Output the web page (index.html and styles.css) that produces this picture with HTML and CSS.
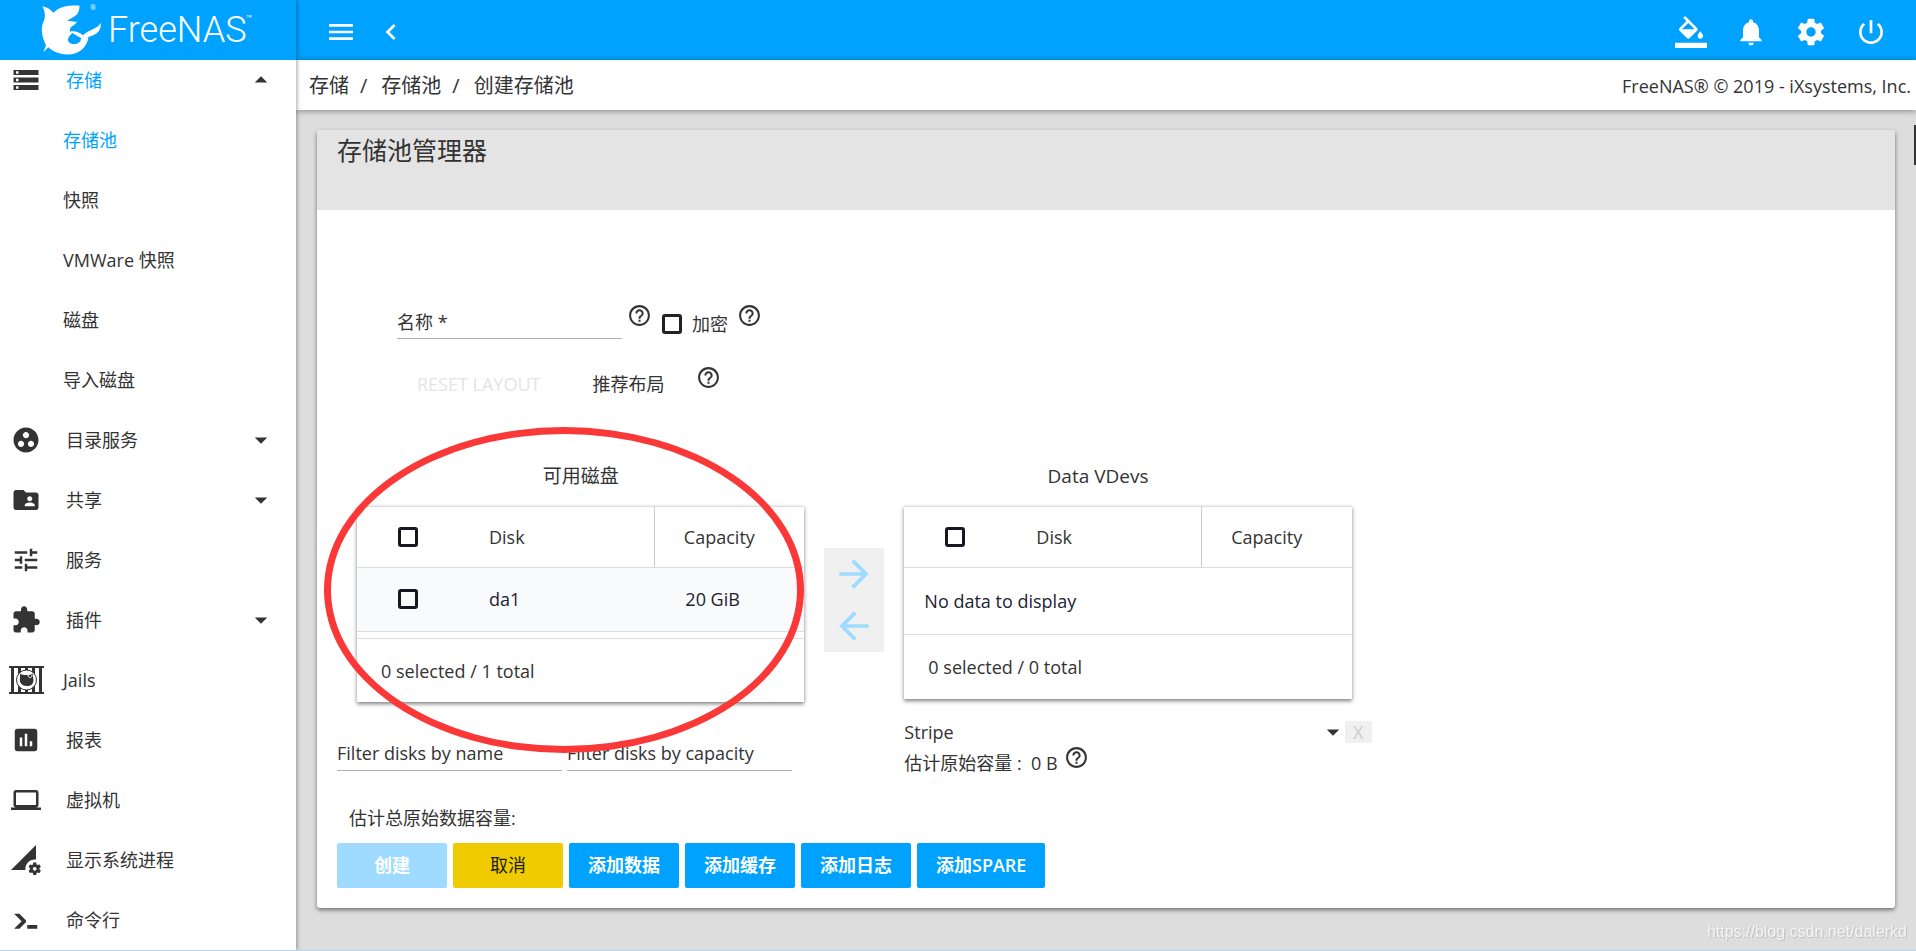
FILE: index.html
```html
<!DOCTYPE html>
<html lang="zh-CN">
<head>
    <meta charset="UTF-8">
    <meta name="viewport" content="width=device-width, initial-scale=1.0">
    <title>FreeNAS - 创建存储池</title>
    <link rel="stylesheet" href="styles.css">
</head>
<body>

    <svg class="symbols" aria-hidden="true">
        <symbol id="help" viewBox="0 0 24 24"><path d="M11 18h2v-2h-2v2zm1-16C6.48 2 2 6.48 2 12s4.48 10 10 10 10-4.48 10-10S17.52 2 12 2zm0 18c-4.41 0-8-3.59-8-8s3.59-8 8-8 8 3.59 8 8-3.59 8-8 8zm0-14c-2.21 0-4 1.79-4 4h2c0-1.1.9-2 2-2s2 .9 2 2c0 2-3 1.75-3 5h2c0-2.25 3-2.5 3-5 0-2.21-1.79-4-4-4z"/></symbol>
        <symbol id="caret-down" viewBox="0 0 24 24"><path d="M7 10l5 5 5-5z"/></symbol>
        <symbol id="caret-up" viewBox="0 0 24 24"><path d="M7 14l5-5 5 5z"/></symbol>
    </svg>

    <aside class="sidebar">
        <a class="brand" href="#">
            <svg class="brand-logo" viewBox="33 12 184 156">
                <path d="M37 18C52 21 62 27 70 38C88 20 112 15 149 16C150 32 143 45 131 51L112 62L142 66L134 74C122 80 118 88 121 95C135 91 150 98 160 106C168 96 180 92 192 86C202 82 210 76 213 68C215 85 208 97 196 103C191 107 184 108 176 111C173 140 150 164 112 164C85 163 66 152 55 142L40 157L48 136C30 100 34 75 43 60C46 45 45 32 37 18Z"/>
                <path class="brand-hole" d="M128 99C116 108 110 120 118 128C128 136 142 134 152 124L154 114L142 108Z"/>
            </svg>
            <sup class="brand-mark">®</sup>
            <span class="brand-name">FreeNAS</span>
            <sup class="brand-mark">™</sup>
        </a>
        <nav class="nav">
            <a class="nav-item active" href="#">
                <svg class="nav-icon" viewBox="0 0 24 24"><path d="M2 20h20v-4H2v4zm2-3h2v2H4v-2zM2 4v4h20V4H2zm4 3H4V5h2v2zm-4 7h20v-4H2v4zm2-3h2v2H4v-2z"/></svg>
                <span>存储</span>
                <svg class="caret"><use href="#caret-up"/></svg>
            </a>
            <a class="nav-item nav-sub active" href="#">存储池</a>
            <a class="nav-item nav-sub" href="#">快照</a>
            <a class="nav-item nav-sub" href="#">VMWare 快照</a>
            <a class="nav-item nav-sub" href="#">磁盘</a>
            <a class="nav-item nav-sub" href="#">导入磁盘</a>
            <a class="nav-item" href="#">
                <svg class="nav-icon" viewBox="0 0 24 24"><path d="M12 2C6.48 2 2 6.48 2 12s4.48 10 10 10 10-4.48 10-10S17.52 2 12 2zM8 17.5c-1.38 0-2.5-1.12-2.5-2.5s1.12-2.5 2.5-2.5 2.5 1.12 2.5 2.5-1.12 2.5-2.5 2.5zM9.5 8c0-1.38 1.12-2.5 2.5-2.5s2.5 1.12 2.5 2.5-1.12 2.5-2.5 2.5S9.5 9.38 9.5 8zm6.5 9.5c-1.38 0-2.5-1.12-2.5-2.5s1.12-2.5 2.5-2.5 2.5 1.12 2.5 2.5-1.12 2.5-2.5 2.5z"/></svg>
                <span>目录服务</span>
                <svg class="caret"><use href="#caret-down"/></svg>
            </a>
            <a class="nav-item" href="#">
                <svg class="nav-icon" viewBox="0 0 24 24"><path d="M20 6h-8l-2-2H4c-1.1 0-1.99.9-1.99 2L2 18c0 1.1.9 2 2 2h16c1.1 0 2-.9 2-2V8c0-1.1-.9-2-2-2zm-5 3c1.1 0 2 .9 2 2s-.9 2-2 2-2-.9-2-2 .9-2 2-2zm4 8h-8v-1c0-1.33 2.67-2 4-2s4 .67 4 2v1z"/></svg>
                <span>共享</span>
                <svg class="caret"><use href="#caret-down"/></svg>
            </a>
            <a class="nav-item" href="#">
                <svg class="nav-icon" viewBox="0 0 24 24"><path d="M3 17v2h6v-2H3zM3 5v2h10V5H3zm10 16v-2h8v-2h-8v-2h-2v6h2zM7 9v2H3v2h4v2h2V9H7zm14 4v-2H11v2h10zm-6-4h2V7h4V5h-4V3h-2v6z"/></svg>
                <span>服务</span>
            </a>
            <a class="nav-item" href="#">
                <svg class="nav-icon" viewBox="0 0 24 24"><path d="M20.5 11H19V7c0-1.1-.9-2-2-2h-4V3.5C13 2.12 11.88 1 10.5 1S8 2.12 8 3.5V5H4c-1.1 0-1.99.9-1.99 2v3.8H3.5c1.49 0 2.7 1.21 2.7 2.7s-1.21 2.7-2.7 2.7H2V20c0 1.1.9 2 2 2h3.8v-1.5c0-1.49 1.21-2.7 2.7-2.7 1.49 0 2.7 1.21 2.7 2.7V22H17c1.1 0 2-.9 2-2v-4h1.5c1.38 0 2.5-1.12 2.5-2.5S21.88 11 20.5 11z"/></svg>
                <span>插件</span>
                <svg class="caret"><use href="#caret-down"/></svg>
            </a>
            <a class="nav-item nav-jails" href="#">
                <svg class="jail-icon" viewBox="0 0 35 30">
                    <path d="M0 1h35v2H0zM0 27h35v2H0zM2 3h3v24H2zM9 3h3v24H9zM16 3h3v24h-3zM23 3h3v24h-3zM30 3h3v24h-3z"/>
                    <circle cx="17.500" cy="15" r="10" class="jail-disc"/>
                    <path d="M11 9l4 1h5l4-1v3c2 8-3 9-6 9-5 0-8-3-7-9z"/>
                    <path d="M19 10c0 3 4 4 4 0" class="jail-line"/>
                </svg>
                <span>Jails</span>
            </a>
            <a class="nav-item" href="#">
                <svg class="nav-icon" viewBox="0 0 24 24"><path d="M19 3H5c-1.1 0-2 .9-2 2v14c0 1.1.9 2 2 2h14c1.1 0 2-.9 2-2V5c0-1.1-.9-2-2-2zM9 17H7v-7h2v7zm4 0h-2V7h2v10zm4 0h-2v-4h2v4z"/></svg>
                <span>报表</span>
            </a>
            <a class="nav-item" href="#">
                <svg class="nav-icon" viewBox="0 0 24 24"><path d="M20 18c1.1 0 1.99-.9 1.99-2L22 6c0-1.1-.9-2-2-2H4c-1.1 0-2 .9-2 2v10c0 1.1.9 2 2 2H0v2h24v-2h-4zM4 6h16v10H4V6z"/></svg>
                <span>虚拟机</span>
            </a>
            <a class="nav-item" href="#">
                <svg class="nav-icon" viewBox="0 0 24 24"><path d="M18.99 11.5c.34 0 .67.03 1 .07L20 0 0 20h11.56c-.04-.33-.07-.66-.07-1 0-4.14 3.36-7.5 7.5-7.5zm3.71 7.99c.02-.16.04-.32.04-.49 0-.17-.01-.33-.04-.49l1.06-.83c.09-.08.12-.21.06-.32l-1-1.73c-.06-.11-.19-.15-.31-.11l-1.24.5c-.26-.2-.54-.37-.85-.49l-.19-1.32c-.01-.12-.12-.21-.24-.21h-2c-.12 0-.23.09-.25.21l-.19 1.32c-.3.13-.59.29-.85.49l-1.24-.5c-.11-.04-.24 0-.31.11l-1 1.73c-.06.11-.04.24.06.32l1.06.83c-.02.16-.03.32-.03.49 0 .17.01.33.03.49l-1.06.83c-.09.08-.12.21-.06.32l1 1.73c.06.11.19.15.31.11l1.24-.5c.26.2.54.37.85.49l.19 1.32c.02.12.12.21.25.21h2c.12 0 .23-.09.25-.21l.19-1.32c.3-.13.59-.29.84-.49l1.25.5c.11.04.24 0 .31-.11l1-1.73c.06-.11.03-.24-.06-.32l-1.07-.83zm-3.71 1.01c-.83 0-1.5-.67-1.5-1.5s.67-1.5 1.5-1.5 1.5.67 1.5 1.5-.67 1.5-1.5 1.5z"/></svg>
                <span>显示系统进程</span>
            </a>
            <a class="nav-item" href="#">
                <svg class="nav-icon" viewBox="0 0 24 24"><path d="M13 19v-3h8v3h-8zM8.500 13L2.470 7h4.240l4.960 4.950c.58.59.58 1.550 0 2.120L6.740 19H2.500l6-6z"/></svg>
                <span>命令行</span>
            </a>
        </nav>
    </aside>

    <div class="page">
        <header class="topbar">
            <button type="button" class="icon-button" aria-label="菜单"><svg class="top-icon" viewBox="0 0 24 24"><path d="M3 18h18v-2H3v2zm0-5h18v-2H3v2zm0-7v2h18V6H3z"/></svg></button>
            <button type="button" class="icon-button" aria-label="返回"><svg class="top-icon" viewBox="0 0 24 24"><path d="M15.410 7.410L14 6l-6 6 6 6 1.410-1.410L10.830 12z"/></svg></button>
            <div class="topbar-actions">
                <button type="button" class="icon-button" aria-label="主题"><svg class="top-icon" viewBox="0 0 24 24"><path d="M16.56 8.94L7.62 0 6.21 1.41l2.38 2.38-5.15 5.15c-.59.59-.59 1.54 0 2.12l5.5 5.5c.29.29.68.44 1.06.44s.77-.15 1.06-.44l5.5-5.5c.59-.58.59-1.53 0-2.12zM5.21 10L10 5.21 14.79 10H5.21zM19 11.5s-2 2.17-2 3.5c0 1.1.9 2 2 2s2-.9 2-2c0-1.33-2-3.5-2-3.5zM0 20h24v4H0z"/></svg></button>
                <button type="button" class="icon-button" aria-label="通知"><svg class="top-icon" viewBox="0 0 24 24"><path d="M12 22c1.1 0 2-.9 2-2h-4c0 1.1.89 2 2 2zm6-6v-5c0-3.07-1.64-5.64-4.5-6.32V4c0-.83-.67-1.5-1.5-1.5s-1.5.67-1.5 1.5v.68C7.63 5.36 6 7.92 6 11v5l-2 2v1h16v-1l-2-2z"/></svg></button>
                <button type="button" class="icon-button" aria-label="设置"><svg class="top-icon" viewBox="0 0 24 24"><path d="M19.43 12.98c.04-.32.07-.64.07-.98s-.03-.66-.07-.98l2.11-1.65c.19-.15.24-.42.12-.64l-2-3.46c-.12-.22-.39-.3-.61-.22l-2.49 1c-.52-.4-1.08-.73-1.69-.98l-.38-2.65C14.46 2.18 14.25 2 14 2h-4c-.25 0-.46.18-.49.42l-.38 2.65c-.61.25-1.17.59-1.69.98l-2.49-1c-.23-.09-.49 0-.61.22l-2 3.46c-.13.22-.07.49.12.64l2.11 1.65c-.04.32-.07.65-.07.98s.03.66.07.98l-2.11 1.65c-.19.15-.24.42-.12.64l2 3.46c.12.22.39.3.61.22l2.49-1c.52.4 1.08.73 1.69.98l.38 2.65c.03.24.24.42.49.42h4c.25 0 .46-.18.49-.42l.38-2.65c.61-.25 1.17-.59 1.69-.98l2.49 1c.23.09.49 0 .61-.22l2-3.46c.12-.22.07-.49-.12-.64l-2.11-1.65zM12 15.5c-1.93 0-3.5-1.57-3.5-3.5s1.57-3.5 3.5-3.5 3.5 1.57 3.5 3.5-1.57 3.5-3.5 3.5z"/></svg></button>
                <button type="button" class="icon-button" aria-label="电源"><svg class="top-icon" viewBox="0 0 24 24"><path d="M13 3h-2v10h2V3zm4.83 2.17l-1.42 1.42C17.99 7.86 19 9.81 19 12c0 3.87-3.13 7-7 7s-7-3.13-7-7c0-2.19 1.01-4.14 2.58-5.42L6.17 5.17C4.23 6.82 3 9.26 3 12c0 4.97 4.03 9 9 9s9-4.03 9-9c0-2.74-1.23-5.18-3.17-6.83z"/></svg></button>
            </div>
        </header>

        <div class="breadcrumb-bar">
            <nav class="breadcrumb">
                <a href="#">存储</a><span>/</span><a href="#">存储池</a><span>/</span><a href="#">创建存储池</a>
            </nav>
            <span class="copyright">FreeNAS® © 2019 - iXsystems, Inc.</span>
        </div>

        <main class="content">
            <form class="card">
                <h1 class="card-title">存储池管理器</h1>

                <div class="card-body">
                    <div class="name-row">
                        <input type="text" class="text-field" aria-label="名称" placeholder="名称 *" required>
                        <svg class="help"><use href="#help"/></svg>
                        <label class="encrypt"><input type="checkbox" class="checkbox">加密</label>
                        <svg class="help"><use href="#help"/></svg>
                    </div>
                    <div class="layout-row">
                        <button type="button" class="flat-button" disabled>RESET LAYOUT</button>
                        <button type="button" class="flat-button">推荐布局</button>
                        <svg class="help"><use href="#help"/></svg>
                    </div>

                    <div class="panels">
                        <section class="panel">
                            <h2 class="panel-title">可用磁盘</h2>
                            <div class="disk-box">
                                <table class="disk-table">
                                    <thead>
                                        <tr>
                                            <th class="col-check"><input type="checkbox" class="checkbox dark" aria-label="选择全部磁盘"></th>
                                            <th class="col-disk">Disk</th>
                                            <th class="col-capacity">Capacity</th>
                                        </tr>
                                    </thead>
                                    <tbody>
                                        <tr class="disk-row">
                                            <td class="col-check"><input type="checkbox" class="checkbox dark" aria-label="选择 da1"></td>
                                            <td>da1</td>
                                            <td class="col-size">20 GiB</td>
                                        </tr>
                                    </tbody>
                                </table>
                                <div class="disk-footer spaced">0 selected / 1 total</div>
                            </div>
                            <div class="filters">
                                <input type="text" class="text-field" aria-label="Filter disks by name" placeholder="Filter disks by name">
                                <input type="text" class="text-field" aria-label="Filter disks by capacity" placeholder="Filter disks by capacity">
                            </div>
                            <div class="highlight"></div>
                        </section>

                        <div class="transfer">
                            <button type="button" class="arrow-button" aria-label="添加" disabled><svg class="arrow" viewBox="0 0 24 24"><path d="M12 4l-1.410 1.410L16.170 11H4v2h12.170l-5.580 5.590L12 20l8-8z"/></svg></button>
                            <button type="button" class="arrow-button" aria-label="移除" disabled><svg class="arrow" viewBox="0 0 24 24"><path d="M20 11H7.830l5.590-5.590L12 4l-8 8 8 8 1.410-1.410L7.830 13H20v-2z"/></svg></button>
                        </div>

                        <section class="panel">
                            <h2 class="panel-title">Data VDevs</h2>
                            <div class="disk-box">
                                <table class="disk-table">
                                    <thead>
                                        <tr>
                                            <th class="col-check"><input type="checkbox" class="checkbox dark" aria-label="选择全部"></th>
                                            <th class="col-disk">Disk</th>
                                            <th class="col-capacity">Capacity</th>
                                        </tr>
                                    </thead>
                                    <tbody>
                                        <tr>
                                            <td class="empty" colspan="3">No data to display</td>
                                        </tr>
                                    </tbody>
                                </table>
                                <div class="disk-footer">0 selected / 0 total</div>
                            </div>
                            <div class="vdev-type">
                                <span class="select-box">
                                    <select class="select" aria-label="VDev 类型">
                                        <option>Stripe</option>
                                    </select>
                                    <svg class="caret"><use href="#caret-down"/></svg>
                                </span>
                                <button type="button" class="remove-button" disabled>X</button>
                            </div>
                            <div class="estimate">估计原始容量 : &nbsp;0 B <svg class="help"><use href="#help"/></svg></div>
                        </section>
                    </div>

                    <p class="total">估计总原始数据容量:</p>
                    <div class="actions">
                        <button type="submit" class="button" disabled>创建</button>
                        <button type="button" class="button accent">取消</button>
                        <button type="button" class="button">添加数据</button>
                        <button type="button" class="button">添加缓存</button>
                        <button type="button" class="button">添加日志</button>
                        <button type="button" class="button">添加SPARE</button>
                    </div>
                </div>
            </form>
        </main>
    </div>

    <div class="scroll-handle"></div>
    <div class="watermark">https://blog.csdn.net/dalerkd</div>

</body>
</html>
```
FILE: styles.css
```css
* {
    box-sizing: border-box;
}

body {
    margin: 0;
    display: flex;
    height: 100vh;
    overflow: hidden;
    font-family: "Open Sans", "Noto Sans CJK SC", sans-serif;
    font-size: 18px;
    line-height: 24px;
    color: #333;
    background-color: #ddd;
    border-bottom: 1px solid #b4d3ea;
}

a {
    color: inherit;
    text-decoration: none;
}

button, input, select {
    font: inherit;
    color: inherit;
    margin: 0;
}

button {
    border: none;
    padding: 0;
    background: none;
}

svg {
    display: block;
    flex: none;
    fill: currentColor;
}

.symbols {
    display: none;
}

/* Sidebar */
.sidebar {
    flex: none;
    width: 296px;
    background-color: #fff;
    box-shadow: 1px 0 4px rgba(0, 0, 0, 0.35);
    z-index: 2;
}

.brand {
    position: relative;
    z-index: 1;
    display: flex;
    align-items: center;
    height: 60px;
    padding-left: 41px;
    background-color: #00a2ff;
    color: #fff;
}

.brand-logo {
    width: 61px;
    height: 52px;
}

.brand-hole {
    fill: #00a2ff;
}

.brand-name {
    font-family: Roboto, sans-serif;
    font-weight: 300;
    font-size: 36px;
    line-height: 60px;
    margin-left: 6px;
}

.brand-mark {
    align-self: flex-start;
    width: 0;
    margin-top: 13px;
    font-size: 7px;
    line-height: 10px;
}

.brand-logo + .brand-mark {
    width: 12px;
    margin: 3px 0 0 -12px;
}

/* The list is scrolled slightly under the brand */
.nav {
    margin-top: -10px;
}

.nav-item {
    display: flex;
    align-items: center;
    height: 60px;
    padding: 0 20px 0 11px;
}

.nav-item.active {
    color: #00a2ff;
}

.nav-sub {
    padding-left: 63px;
}

.nav-icon {
    width: 30px;
    height: 30px;
    margin-right: 25px;
    fill: #333;
}

.nav-jails {
    padding-left: 9px;
}

.jail-icon {
    width: 35px;
    height: 30px;
    margin-right: 19px;
}

.jail-disc {
    fill: #fff;
    stroke: #333;
}

.jail-line {
    fill: none;
    stroke: #fff;
}

.caret {
    width: 30px;
    height: 30px;
    margin-left: auto;
    fill: #333;
}

/* Top bar */
.page {
    flex: 1;
    min-width: 0;
    display: flex;
    flex-direction: column;
}

.topbar {
    flex: none;
    display: flex;
    align-items: center;
    height: 60px;
    padding: 4px 29px 0 29px;
    gap: 18px;
    background-color: #00a2ff;
    color: #fff;
}

.topbar-actions {
    display: flex;
    gap: 28px;
    margin-left: auto;
}

.top-icon {
    width: 32px;
    height: 32px;
}

.breadcrumb-bar {
    flex: none;
    display: flex;
    align-items: center;
    justify-content: space-between;
    height: 50px;
    padding: 2px 5px 0 13px;
    background-color: #fff;
    box-shadow: 0 1px 6px rgba(0, 0, 0, 0.4);
    font-size: 20px;
}

.breadcrumb span {
    margin: 0 14px 0 11px;
}

.copyright {
    font-size: 18px;
}

/* Card */
.content {
    flex: 1;
    padding: 20px 21px;
}

.card {
    background-color: #fff;
    border-radius: 3px;
    box-shadow: 0 2px 4px rgba(0, 0, 0, 0.5);
}

.card-title {
    margin: 0;
    height: 80px;
    padding: 4px 20px;
    border-radius: 3px 3px 0 0;
    background-color: #e4e4e4;
    font-size: 25px;
    font-weight: 400;
    line-height: 32px;
}

.card-body {
    padding: 90px 20px 20px;
}

.text-field {
    width: 225px;
    height: 34px;
    padding: 0;
    border: none;
    border-bottom: 1px solid #b0b0b0;
    background: none;
    outline: none;
}

.text-field::placeholder {
    color: #333;
    opacity: 1;
}

.help {
    width: 25px;
    height: 25px;
}

.checkbox {
    appearance: none;
    display: block;
    width: 20px;
    height: 20px;
    border: 3px solid #222;
    border-radius: 3px;
}

.checkbox.dark {
    border-color: #171724;
}

.name-row {
    display: flex;
    align-items: flex-start;
    height: 62px;
    padding-left: 60px;
}

.name-row .text-field {
    margin: 5px 5px 0 0;
}

.name-row .help {
    margin-top: 3px;
}

.encrypt {
    display: flex;
    align-items: center;
    gap: 10px;
    margin: 12px 9px 0 10px;
}

.layout-row {
    display: flex;
    align-items: flex-start;
    height: 84px;
    padding-left: 80px;
}

.layout-row .help {
    margin: 3px 0 0 32px;
}

.flat-button {
    margin-top: 10px;
    margin-right: 52px;
}

.flat-button:disabled {
    color: #e4e4e4;
}

.flat-button + .flat-button {
    margin-right: 0;
}

/* Disk panels */
.panels {
    display: grid;
    grid-template-columns: 32fr 60px 32fr 36fr;
    column-gap: 20px;
    padding-left: 20px;
}

.panel {
    position: relative;
}

.panel-title {
    margin: 0;
    padding: 18px 0;
    text-align: center;
    font-size: 19px;
    font-weight: 400;
}

.panel:last-child .panel-title {
    padding-right: 60px;
}

.disk-box {
    background-color: #fff;
    border-top: 1px solid #ddd;
    box-shadow: 0 2px 4px rgba(0, 0, 0, 0.5);
}

.disk-table {
    width: 100%;
    table-layout: fixed;
    border-collapse: collapse;
    text-align: left;
}

.disk-table th, .disk-table td {
    height: 60px;
    padding: 0;
    font-weight: 400;
    border-bottom: 1px solid #ddd;
}

.disk-table td {
    height: 64px;
    color: #222233;
}

.disk-table .col-check {
    width: 132px;
    padding-left: 41px;
}

.disk-table .col-capacity {
    width: 150px;
    padding-left: 29px;
    border-left: 1px solid #ccc;
}

.disk-table .col-size {
    padding-left: 31px;
}

.disk-table .empty {
    height: 67px;
    padding-left: 20px;
}

.disk-row {
    background-color: #f9fafc;
}

.disk-footer {
    height: 64px;
    padding: 20px 24px;
}

.disk-footer.spaced {
    margin-top: 6px;
    border-top: 1px solid #ddd;
}

.filters {
    display: flex;
    gap: 5px;
    margin: 35px 0 0 -20px;
}

/* Ring drawn round the available disks */
.highlight {
    position: absolute;
    top: -19px;
    left: -33px;
    right: 0;
    height: 326px;
    border: 7px solid #fb3838;
    border-radius: 50%;
    pointer-events: none;
}

.transfer {
    display: flex;
    flex-direction: column;
    align-self: start;
    margin-top: 102px;
    background-color: #f0f0f0;
    color: #9edbff;
}

.arrow-button {
    display: flex;
    justify-content: center;
    padding: 4px 0;
}

.arrow {
    width: 44px;
    height: 44px;
}

.vdev-type {
    display: flex;
    align-items: center;
    margin: 18px -20px 4px 0;
}

.select-box {
    flex: 1;
    display: grid;
    align-items: center;
}

.select, .select-box .caret {
    grid-area: 1 / 1;
}

.select {
    appearance: none;
    border: none;
    padding: 0;
    background: none;
}

.select-box .caret {
    margin-right: -3px;
    pointer-events: none;
}

.remove-button {
    width: 27px;
    height: 22px;
    line-height: 22px;
    background-color: #f0f0f0;
    color: #ccc;
}

.estimate {
    display: flex;
    gap: 6px;
}

.estimate .help {
    margin-top: -6px;
}

.total {
    margin: 31px 12px 13px;
}

.actions {
    display: flex;
    gap: 6px;
}

.button {
    min-width: 110px;
    height: 45px;
    padding: 0 19px;
    border-radius: 2px;
    background-color: #00a2ff;
    color: #fff;
    font-weight: 600;
}

.button:disabled {
    background-color: #9edbff;
}

.button.accent {
    background-color: #f0cb00;
    color: #222;
    font-weight: 400;
}

.scroll-handle {
    position: fixed;
    top: 125px;
    right: 0;
    width: 2px;
    height: 40px;
    background-color: #333;
}

.watermark {
    position: fixed;
    right: 9px;
    bottom: 7px;
    font-family: "Liberation Sans", sans-serif;
    font-size: 16px;
    color: #f4f4f4;
    text-shadow: 1px 1px 1px #bbb;
}
```
